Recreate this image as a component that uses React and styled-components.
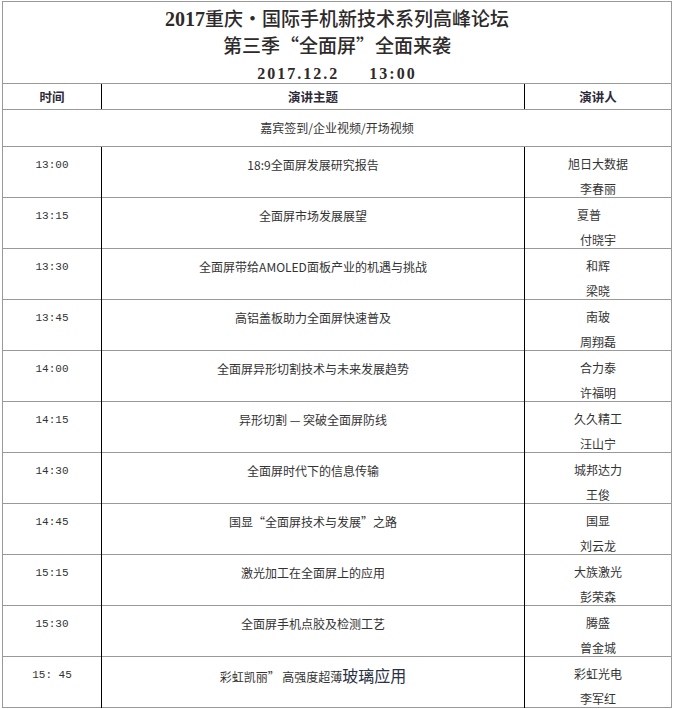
import React from 'react';
import styled, { createGlobalStyle } from 'styled-components';

const Global = createGlobalStyle`
  html, body { margin: 0; padding: 0; background: #fff; }
  body {
    font-family: "Noto Sans CJK SC", "Noto Sans", sans-serif;
    color: #333;
    -webkit-font-smoothing: antialiased;
  }
`;

const Page = styled.div`
  padding: 1px 0 0 2px;
`;

const Table = styled.div`
  width: 670px;
  box-sizing: border-box;
  border: 1px solid #999;
  border-bottom: none;
`;

const Title = styled.div`
  box-sizing: content-box;
  padding: 3px 0 0;
  height: 78px;
  border-bottom: 1px solid #999;
  text-align: center;
  font-family: "Noto Sans CJK SC", sans-serif;
  font-size: 19px;
  font-weight: 500;
  line-height: 26px;
  color: #2e2a2a;
`;

const TitleLine = styled.div`
  white-space: pre;
`;

const Num = styled.span`
  font-family: "Liberation Serif", serif;
  font-weight: 700;
  font-size: ${(p) => (p.$mono ? '16px' : '20px')};
  letter-spacing: ${(p) => (p.$mono ? '2px' : '0')};
`;

const Dot = styled.span`
  display: inline-block;
  width: 1em;
  text-align: center;
`;

const Row = styled.div`
  display: grid;
  grid-template-columns: 98px 1fr 147px;
  height: ${(p) => p.$h}px;
  border-bottom: 1px solid #999;
`;

const Cell = styled.div`
  border-left: ${(p) => (p.$first ? 'none' : '1px solid #000')};
  text-align: center;
  font-size: 12px;
  line-height: 24px;
  padding-top: 6px;
  color: #333;
`;

const HeadCell = styled(Cell)`
  padding-top: 0;
  line-height: 25px;
  font-weight: 700;
  font-size: 12.5px;
  color: #2e2a3a;
`;

const Time = styled(Cell)`
  font-family: "Liberation Mono", monospace;
  font-size: 11px;
  padding-top: 6px;
  white-space: pre;
`;

const Speakers = styled(Cell)`
  padding-top: 4px;
  line-height: 25px;
`;

const Speaker = styled.div`
  position: relative;
  left: ${(p) => p.$shift || 0}px;
`;

const SpanRow = styled.div`
  height: 36px;
  border-bottom: 1px solid #999;
  text-align: center;
  font-size: 12px;
  line-height: 36px;
`;

const Big = styled.span`
  font-size: 16px;
  color: #2a2f44;
`;

const rows = [
  { t: '13:00', topic: '18:9全面屏发展研究报告', s: ['旭日大数据', '李春丽'] },
  { t: '13:15', topic: '全面屏市场发展展望', s: ['夏普', '付晓宇'], shift: -9 },
  { t: '13:30', topic: '全面屏带给AMOLED面板产业的机遇与挑战', s: ['和辉', '梁晓'] },
  { t: '13:45', topic: '高铝盖板助力全面屏快速普及', s: ['南玻', '周翔磊'] },
  { t: '14:00', topic: '全面屏异形切割技术与未来发展趋势', s: ['合力泰', '许福明'] },
  { t: '14:15', topic: '异形切割 — 突破全面屏防线', s: ['久久精工', '汪山宁'] },
  { t: '14:30', topic: '全面屏时代下的信息传输', s: ['城邦达力', '王俊'] },
  { t: '14:45', topic: '国显“全面屏技术与发展”之路', s: ['国显', '刘云龙'] },
  { t: '15:15', topic: '激光加工在全面屏上的应用', s: ['大族激光', '彭荣森'] },
  { t: '15:30', topic: '全面屏手机点胶及检测工艺', s: ['腾盛', '曾金城'] },
  {
    t: '15: 45',
    topic: (
      <>
        彩虹凯丽” 高强度超薄<Big>玻璃应用</Big>
      </>
    ),
    s: ['彩虹光电', '李军红'],
  },
];

export default function App() {
  return (
    <>
      <Global />
      <Page>
        <Table>
          <Title>
            <TitleLine>
              <Num>2017</Num>重庆<Dot>·</Dot>国际手机新技术系列高峰论坛
            </TitleLine>
            <TitleLine>第三季“全面屏”全面来袭</TitleLine>
            <TitleLine>
              <Num $mono>{'2017.12.2     13:00'}</Num>
            </TitleLine>
          </Title>
          <Row $h={25}>
            <HeadCell $first>时间</HeadCell>
            <HeadCell>演讲主题</HeadCell>
            <HeadCell>演讲人</HeadCell>
          </Row>
          <SpanRow>嘉宾签到/企业视频/开场视频</SpanRow>
          {rows.map((r, i) => (
            <Row key={i} $h={50}>
              <Time $first>{r.t}</Time>
              <Cell>{r.topic}</Cell>
              <Speakers>
                <Speaker $shift={r.shift}>{r.s[0]}</Speaker>
                <Speaker>{r.s[1]}</Speaker>
              </Speakers>
            </Row>
          ))}
        </Table>
      </Page>
    </>
  );
}
